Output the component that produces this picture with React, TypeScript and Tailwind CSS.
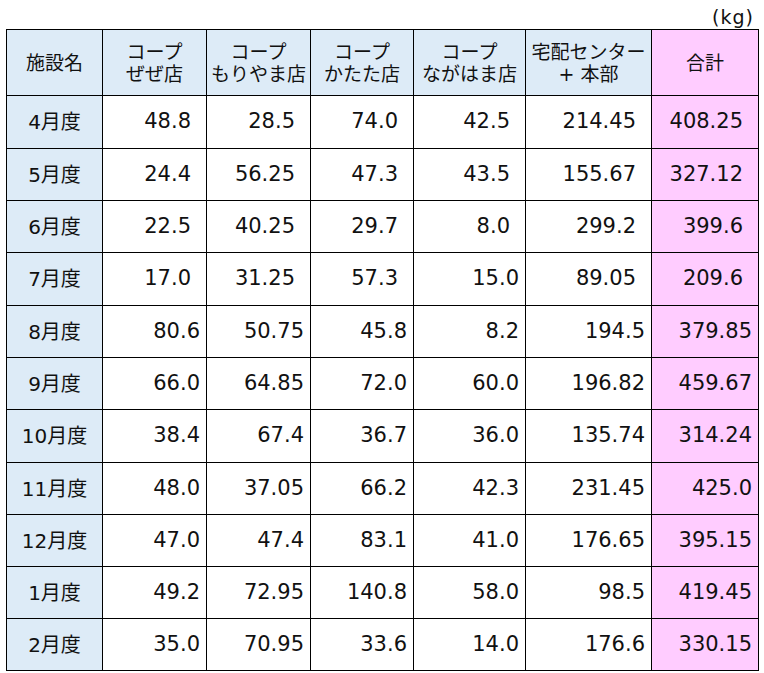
import React from "react";

const headers: string[][] = [
  ["施設名"],
  ["コープ", "ぜぜ店"],
  ["コープ", "もりやま店"],
  ["コープ", "かたた店"],
  ["コープ", "ながはま店"],
  ["宅配センター", "+ 本部"],
  ["合計"],
];

const rows: { m: string; v: string[]; wide: boolean[] }[] = [
  { m: "4月度", v: ["48.8", "28.5", "74.0", "42.5", "214.45", "408.25"], wide: [true, true, true, true, true, true] },
  { m: "5月度", v: ["24.4", "56.25", "47.3", "43.5", "155.67", "327.12"], wide: [true, true, true, true, true, true] },
  { m: "6月度", v: ["22.5", "40.25", "29.7", "8.0", "299.2", "399.6"], wide: [true, true, true, true, true, true] },
  { m: "7月度", v: ["17.0", "31.25", "57.3", "15.0", "89.05", "209.6"], wide: [true, true, true, false, true, true] },
  { m: "8月度", v: ["80.6", "50.75", "45.8", "8.2", "194.5", "379.85"], wide: [false, false, false, false, false, false] },
  { m: "9月度", v: ["66.0", "64.85", "72.0", "60.0", "196.82", "459.67"], wide: [false, false, false, false, false, false] },
  { m: "10月度", v: ["38.4", "67.4", "36.7", "36.0", "135.74", "314.24"], wide: [false, false, false, false, false, false] },
  { m: "11月度", v: ["48.0", "37.05", "66.2", "42.3", "231.45", "425.0"], wide: [false, false, false, false, false, false] },
  { m: "12月度", v: ["47.0", "47.4", "83.1", "41.0", "176.65", "395.15"], wide: [false, false, false, false, false, false] },
  { m: "1月度", v: ["49.2", "72.95", "140.8", "58.0", "98.5", "419.45"], wide: [false, false, false, false, false, false] },
  { m: "2月度", v: ["35.0", "70.95", "33.6", "14.0", "176.6", "330.15"], wide: [false, false, false, false, false, false] },
];

const font = { fontFamily: '"DejaVu Sans", "Noto Sans CJK JP", sans-serif' };

export default function App() {
  return (
    <div className="w-[764px] h-[673px] bg-white text-[#111] overflow-hidden" style={font}>
      <div className="h-[29px] flex items-center justify-end pr-[10px] pt-[5px] text-[19px] tracking-[1px]">
        (kg)
      </div>
      <div
        className="ml-[6px] grid grid-cols-[96px_104px_104px_103px_112px_126px_107px] grid-rows-[66px_53px_52px_52px_53px_52px_52px_53px_52px_52px_52px_52px] border-l border-t border-black w-[753px]"
      >
        {headers.map((h, i) => (
          <div
            key={"h" + i}
            className={
              "border-r border-b border-black flex flex-col items-center justify-center text-[19px] leading-[22px] " +
              (i === 6 ? "bg-[#ffccff]" : "bg-[#ddebf7]")
            }
          >
            {h.map((line, j) => (
              <div key={j} className="whitespace-pre">
                {line}
              </div>
            ))}
          </div>
        ))}
        {rows.map((r, ri) => (
          <React.Fragment key={"r" + ri}>
            <div className="border-r border-b border-black bg-[#ddebf7] flex items-center justify-center text-[20px]">
              {r.m}
            </div>
            {r.v.map((val, ci) => (
              <div
                key={ci}
                className={
                  "border-r border-b border-black flex items-center justify-end text-[21px] " +
                  (r.wide[ci] ? "pr-[15px] " : "pr-[6px] ") +
                  (ci === 5 ? "bg-[#ffccff]" : "bg-white")
                }
              >
                {val}
              </div>
            ))}
          </React.Fragment>
        ))}
      </div>
    </div>
  );
}
